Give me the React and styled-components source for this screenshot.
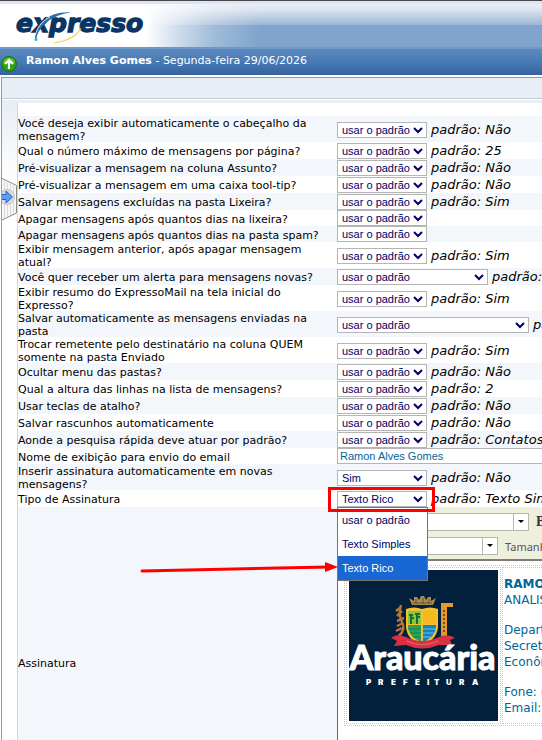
import React, { useState } from 'react';
import styled, { createGlobalStyle } from 'styled-components';

const GlobalStyle = createGlobalStyle`
  * {
    box-sizing: border-box;
  }

  html {
    scrollbar-width: none;
  }

  body {
    margin: 0;
    background: #fff;
    color: #000;
    font-family: Verdana, 'DejaVu Sans', sans-serif;
    font-size: 11px;
    line-height: 13px;
  }
`;

const Page = styled.div`
  display: flex;
  flex-direction: column;
  min-height: 100vh;
  border-top: 1px solid #46464e;
  overflow: hidden;
`;

const Banner = styled.header`
  height: 46px;
  flex: none;
  padding: 7px 0 0 16px;
  border-top: 3px solid #dfe5f0;
  background: linear-gradient(
      90deg,
      #fff 145px,
      rgba(255, 255, 255, 0.6) 180px,
      rgba(255, 255, 255, 0.25) 215px,
      rgba(255, 255, 255, 0) 260px
    ),
    linear-gradient(#e8eef7 0, #dbe4ef 6px, #9bb7d4 21px, #82a5cf 21px, #7ea3cb 100%);

  svg {
    overflow: visible;
  }
`;

const UserBar = styled.div`
  display: flex;
  flex: none;
  align-items: flex-end;
  gap: 9px;
  height: 28px;
  padding: 0 0 3px 1px;
  border-top: 2px solid #6e98c5;
  background: linear-gradient(#5c89bf, #487ab6 50%, #3462a0);
  color: #fff;
  white-space: nowrap;
`;

const UserName = styled.p`
  margin: 0;
  padding-bottom: 3px;
  font-size: 11px;
  line-height: 16px;
`;

const Frame = styled.div`
  display: flex;
  flex: 1;
  flex-direction: column;
  margin: 2px 0 0 1px;
  border: solid #9a9a9a;
  border-width: 1px 0 0 1px;
`;

const Strip = styled.div`
  height: 21px;
  margin-bottom: 1px;
  border-bottom: 1px solid #c5ccd8;
  background: #e8eef6;
`;

const Body = styled.div`
  display: grid;
  flex: 1;
  grid-template-columns: 15px minmax(0, 1fr);
  border-top: 3px solid #e8eef6;
`;

const Gutter = styled.div`
  padding-top: 75px;
  background: linear-gradient(#e8eef6, #fff 80px);
`;

const Content = styled.main`
  display: flex;
  flex-direction: column;
  padding-top: 13px;
  border-left: 1px solid #d0d7e0;
`;

const Field = styled.div`
  display: flex;
  align-items: center;
  gap: 4px;
  padding-top: 1px;
  white-space: nowrap;
`;

const Row = styled.div`
  display: grid;
  grid-template-columns: 319px minmax(0, 1fr);
  align-items: center;
  min-height: ${props => (props.$short ? 16 : 17)}px;
  background: ${props => (props.$shaded ? '#f3f7fb' : '#fff')};

  ${Field} {
    padding-top: ${props => (props.$short ? 0 : 1)}px;
  }

  &:last-child {
    flex: 1;
  }
`;

const Label = styled.label`
  padding-top: 1px;
  margin-bottom: -1px;
`;

const SelectWrap = styled.div`
  position: relative;
  display: flex;
  flex: none;
  width: ${props => props.$width || 90}px;
`;

const Select = styled.select`
  width: 100%;
  height: 16px;
  padding: 0 4px;
  border: 1px solid #b5b5b5;
  border-radius: 0;
  appearance: none;
  background: #fff;
  color: #000066;
  font: 11px/14px 'Liberation Sans', Arial, sans-serif;
`;

const Arrow = styled.svg`
  position: absolute;
  top: 5px;
  right: 4px;
  pointer-events: none;
`;

const Fallback = styled.em`
  height: 16px;
  font-size: 13px;
  line-height: 16px;
`;

const NameInput = styled.input`
  width: 100%;
  height: 16px;
  padding: 0 2px;
  border: 1px solid #b5b5b5;
  border-right: 0;
  border-radius: 0;
  color: #006699;
  font: 11px/14px 'Liberation Sans', Arial, sans-serif;
`;

const Highlight = styled.div`
  position: absolute;
  inset: -4px -8px -5px -9px;
  z-index: 3;
  border: 3px solid #f00;
  pointer-events: none;
`;

const Menu = styled.div`
  position: absolute;
  top: 16px;
  left: 0;
  z-index: 2;
  width: 91px;
  border: 1px solid #767676;
  background: #fff;
`;

const Option = styled.button`
  display: block;
  width: 100%;
  height: 24px;
  padding: 0 4px;
  border: 0;
  background: ${props => (props.$active ? '#1967d2' : '#fff')};
  color: ${props => (props.$active ? '#fff' : '#000066')};
  font: 11px/24px 'Liberation Sans', Arial, sans-serif;
  text-align: left;
  white-space: nowrap;
`;

const Pointer = styled.svg`
  position: absolute;
  top: 66px;
  right: 89px;
  z-index: 3;
  pointer-events: none;
`;

const Editor = styled.section`
  min-height: 310px;
  border-left: 1px solid #696969;
  background: #fff;
  overflow: hidden;
`;

const Toolbar = styled.div`
  display: flex;
  flex-direction: column;
  gap: 6px;
  padding: 6px 0 4px 4px;
  border-bottom: 2px solid #7d7d76;
  background: #efefde;
`;

const ToolRow = styled.div`
  display: flex;
  align-items: center;
  gap: 7px;
  color: #555;
  font-family: Tahoma, 'Noto Sans', sans-serif;
  font-size: 11px;
  white-space: nowrap;
`;

const Combo = styled.button`
  display: flex;
  flex: none;
  align-items: center;
  justify-content: flex-end;
  width: ${props => props.$width}px;
  height: 18px;
  padding: 0;
  border: 1px solid #b8b8a8;
  background: #fff;

  svg {
    box-sizing: content-box;
    padding: 6px 4px;
    border-left: 1px solid #b8b8a8;
  }
`;

const Bold = styled.button`
  padding: 0;
  border: 0;
  background: none;
  color: #333;
  font: bold 14px/16px 'Liberation Serif', serif;
`;

const Signature = styled.div`
  display: flex;
  gap: 1px;
  width: 320px;
  margin: 4px 0 0 6px;
  padding: 1px;
  border: 1px dotted #c8c8c8;
  color: #006699;
  font-size: 12px;
  line-height: 16px;
`;

const LogoCell = styled.div`
  display: flex;
  flex: none;
  padding: 2px;
  border: 1px dotted #c8c8c8;
`;

const TextCell = styled.div`
  display: flex;
  flex: 1;
  flex-direction: column;
  gap: 14px;
  padding: 8px 1px 0;
  border: 1px dotted #c8c8c8;
  white-space: nowrap;

  p {
    margin: 0;
  }
`;

const ExpressoLogo = () => (
  <svg width="134" height="34" viewBox="0 0 134 34" role="img" aria-label="expresso">
    <text
      x="0"
      y="21"
      fill="#0a3464"
      stroke="#0a3464"
      strokeWidth="1.3"
      fontFamily="DejaVu Sans, sans-serif"
      fontSize="25"
      fontWeight="bold"
      fontStyle="italic"
    >
      expresso
    </text>
    <path d="M19 28C19 12 34 0 55 1.500C36 4 22 15 20.500 28Z" fill="#2f6f9f" />
    <path d="M18 29C20 17 26 10 34 6" fill="none" stroke="#fff" strokeWidth="0.8" />
    <path d="M38 32Q58 29 65 17Q60 29 38 32Z" fill="#f5c542" stroke="#f5c542" strokeWidth="0.6" />
    <circle cx="20" cy="28.500" r="1.500" fill="#27b5dd" />
  </svg>
);

const StatusIcon = () => (
  <svg width="16" height="16" viewBox="0 0 16 16" aria-hidden="true">
    <circle cx="8" cy="8" r="7.500" fill="#2aa40d" stroke="#147a05" />
    <path d="M2 7A6 5.500 0 0 1 14 7Q8 9 2 7Z" fill="#78d24c" opacity=".6" />
    <path d="M8 13V4M4 8L8 4L12 8" fill="none" stroke="#fff" strokeWidth="2.200" />
  </svg>
);

const Handle = () => (
  <svg width="15" height="44" viewBox="0 0 15 44" aria-hidden="true">
    <path d="M-3 -1L14.500 7.500V35L-3 43.500Z" fill="#f7f7f7" stroke="#8a8a8a" />
    <path d="M2.500 3V40M5.500 5V39M8.500 6V37M11.500 8V36" stroke="#d8d8d8" />
    <circle cx="5" cy="19" r="7.500" fill="#d9dce2" stroke="#c4c4c4" />
    <path
      d="M-1 16.500H4V13L10.500 19L4 25V21.500H-1Z"
      fill="#5b9cf5"
      stroke="#2b61bd"
    />
  </svg>
);

const Chevron = () => (
  <Arrow width="10" height="7" viewBox="0 0 10 7" aria-hidden="true">
    <path d="M1 1L5 5L9 1" fill="none" stroke="#000066" strokeWidth="2" />
  </Arrow>
);

const Caret = () => (
  <svg width="6" height="4" viewBox="0 0 6 4" aria-hidden="true">
    <path d="M0 0H6L3 3Z" fill="#000" />
  </svg>
);

const CityLogo = () => (
  <svg width="149" height="151" viewBox="0 0 149 151" role="img" aria-label="Araucária Prefeitura">
    <rect width="149" height="151" fill="#021f3c" />
    <path d="M60 28L65 31V27H68L70 30L72 26H75L77 30L79 27H82V31L87 28L84 35H63Z" fill="#a98b52" />
    <path d="M64 33H83M67 29V34M74 28V34M80 29V34" stroke="#6b5428" />
    <path d="M57 39Q65 36 73 39Q81 36 89 39V57Q88 70 73 75Q58 70 57 57Z" fill="#f2c230" />
    <path d="M59 41H72V54H59Z" fill="#8cc63f" />
    <path d="M60 45H64M66 44H71M61 48H65M67 47H71M62 46V54M68 45V54" stroke="#1f6b2a" strokeWidth="2" />
    <path d="M74 41H87V54H74Z" fill="#f7b81e" />
    <path d="M59 55H72V72Q60 67 59 57Z" fill="#27a35c" />
    <path d="M74 55H87Q87 67 74 72Z" fill="#1683bd" />
    <path d="M59 59H72M61 63H72M64 67H72" stroke="#1c7d46" />
    <path d="M74 59H87M74 63H85M74 67H82" stroke="#6cc1e6" />
    <path
      d="M52 35Q49 45 53 52T50 66M52 37L47 41M53 41L48 46M55 48L48 51M54 53L48 56M53 58L47 61"
      fill="none"
      stroke="#b87533"
      strokeWidth="2.500"
    />
    <path d="M92 33H104V37H98V66H92Z" fill="#e09b2f" />
    <path d="M95 40V64" stroke="#8e3e25" strokeWidth="2" strokeDasharray="2 2" />
    <path d="M42 68Q47 63 57 67Q73 75 90 67Q99 63 106 68L101 70L103 75L90 75Q73 82 57 75L45 76L48 71Z" fill="#d93142" />
    <path d="M58 71Q73 78 89 71" fill="none" stroke="#ef8a92" strokeDasharray="2 1" />
    <text x="73.500" y="100" fill="#fff" stroke="#fff" textAnchor="middle" fontFamily="Lato, sans-serif" fontSize="34" fontWeight="900">
      Araucária
    </text>
    <text
      x="17 29 42 54 66 78 85 97 110 123"
      y="115"
      fill="#fff"
      fontFamily="Inter, sans-serif"
      fontSize="8"
      fontWeight="900"
    >
      PREFEITURA
    </text>
  </svg>
);

const settings = [
  ['Você deseja exibir automaticamente o cabeçalho da mensagem?', 'Não'],
  ['Qual o número máximo de mensagens por página?', '25'],
  ['Pré-visualizar a mensagem na coluna Assunto?', 'Não'],
  ['Pré-visualizar a mensagem em uma caixa tool-tip?', 'Não'],
  ['Salvar mensagens excluídas na pasta Lixeira?', 'Sim'],
  ['Apagar mensagens após quantos dias na lixeira?', ''],
  ['Apagar mensagens após quantos dias na pasta spam?', ''],
  ['Exibir mensagem anterior, após apagar mensagem atual?', 'Sim'],
  ['Você quer receber um alerta para mensagens novas?', 'Não', 151],
  ['Exibir resumo do ExpressoMail na tela inicial do Expresso?', 'Sim'],
  ['Salvar automaticamente as mensagens enviadas na pasta', 'Não', 192],
  ['Trocar remetente pelo destinatário na coluna QUEM somente na pasta Enviado', 'Sim'],
  ['Ocultar menu das pastas?', 'Não'],
  ['Qual a altura das linhas na lista de mensagens?', '2'],
  ['Usar teclas de atalho?', 'Não'],
  ['Salvar rascunhos automaticamente', 'Não'],
  ['Aonde a pesquisa rápida deve atuar por padrão?', 'Contatos']
];

const signatureTypes = ['usar o padrão', 'Texto Simples', 'Texto Rico'];

const SelectBox = ({ id, width, value = 'usar o padrão', children }) => (
  <SelectWrap $width={width}>
    <Select id={id} defaultValue={value}>
      <option>{value}</option>
    </Select>
    <Chevron />
    {children}
  </SelectWrap>
);

const App = () => {
  const [type, setType] = useState('Texto Rico');

  return (
    <Page>
      <GlobalStyle />
      <Banner>
        <ExpressoLogo />
      </Banner>
      <UserBar>
        <StatusIcon />
        <UserName>
          <b>Ramon Alves Gomes</b> - Segunda-feira 29/06/2026
        </UserName>
      </UserBar>
      <Frame>
        <Strip />
        <Body>
          <Gutter>
            <Handle />
          </Gutter>
          <Content>
            {settings.map(([label, standard, width], i) => (
              <Row key={label} $shaded={i % 2 === 0} $short={!standard}>
                <Label htmlFor={`setting-${i}`}>{label}</Label>
                <Field>
                  <SelectBox id={`setting-${i}`} width={width} />
                  {standard && <Fallback>padrão: {standard}</Fallback>}
                </Field>
              </Row>
            ))}
            <Row $short>
              <Label htmlFor="display-name">Nome de exibição para envio do email</Label>
              <NameInput id="display-name" defaultValue="Ramon Alves Gomes" />
            </Row>
            <Row $shaded>
              <Label htmlFor="auto-signature">
                Inserir assinatura automaticamente em novas mensagens?
              </Label>
              <Field>
                <SelectBox id="auto-signature" value="Sim" />
                <Fallback>padrão: Não</Fallback>
              </Field>
            </Row>
            <Row>
              <Label htmlFor="signature-type">Tipo de Assinatura</Label>
              <Field>
                <SelectBox key={type} id="signature-type" value={type}>
                  <Menu>
                    {signatureTypes.map(name => (
                      <Option
                        key={name}
                        type="button"
                        $active={name === type}
                        onClick={() => setType(name)}
                      >
                        {name}
                      </Option>
                    ))}
                  </Menu>
                  <Highlight />
                  <Pointer width="198" height="22" viewBox="0 0 198 22" aria-hidden="true">
                    <path d="M2 14L188 10" stroke="#f00" strokeWidth="3" strokeLinecap="round" />
                    <path d="M185 5L198 10L185 15Z" fill="#f00" />
                  </Pointer>
                </SelectBox>
                <Fallback>padrão: Texto Simples</Fallback>
              </Field>
            </Row>
            <Row $shaded>
              <Label as="span">Assinatura</Label>
              <Editor aria-label="Assinatura">
                <Toolbar>
                  <ToolRow>
                    <Combo type="button" aria-label="Estilo" $width={187}>
                      <Caret />
                    </Combo>
                    <Bold type="button">B</Bold>
                  </ToolRow>
                  <ToolRow>
                    <Combo type="button" aria-label="Fonte" $width={156}>
                      <Caret />
                    </Combo>
                    Tamanho
                  </ToolRow>
                </Toolbar>
                <Signature>
                  <LogoCell>
                    <CityLogo />
                  </LogoCell>
                  <TextCell>
                    <p>
                      <b>RAMON ALVES GOMES</b>
                      <br />
                      ANALISTA
                    </p>
                    <p>
                      Departamento
                      <br />
                      Secretaria
                      <br />
                      Econômico
                    </p>
                    <p>
                      Fone: (41)
                      <br />
                      Email:
                    </p>
                  </TextCell>
                </Signature>
              </Editor>
            </Row>
          </Content>
        </Body>
      </Frame>
    </Page>
  );
};

export default App;
